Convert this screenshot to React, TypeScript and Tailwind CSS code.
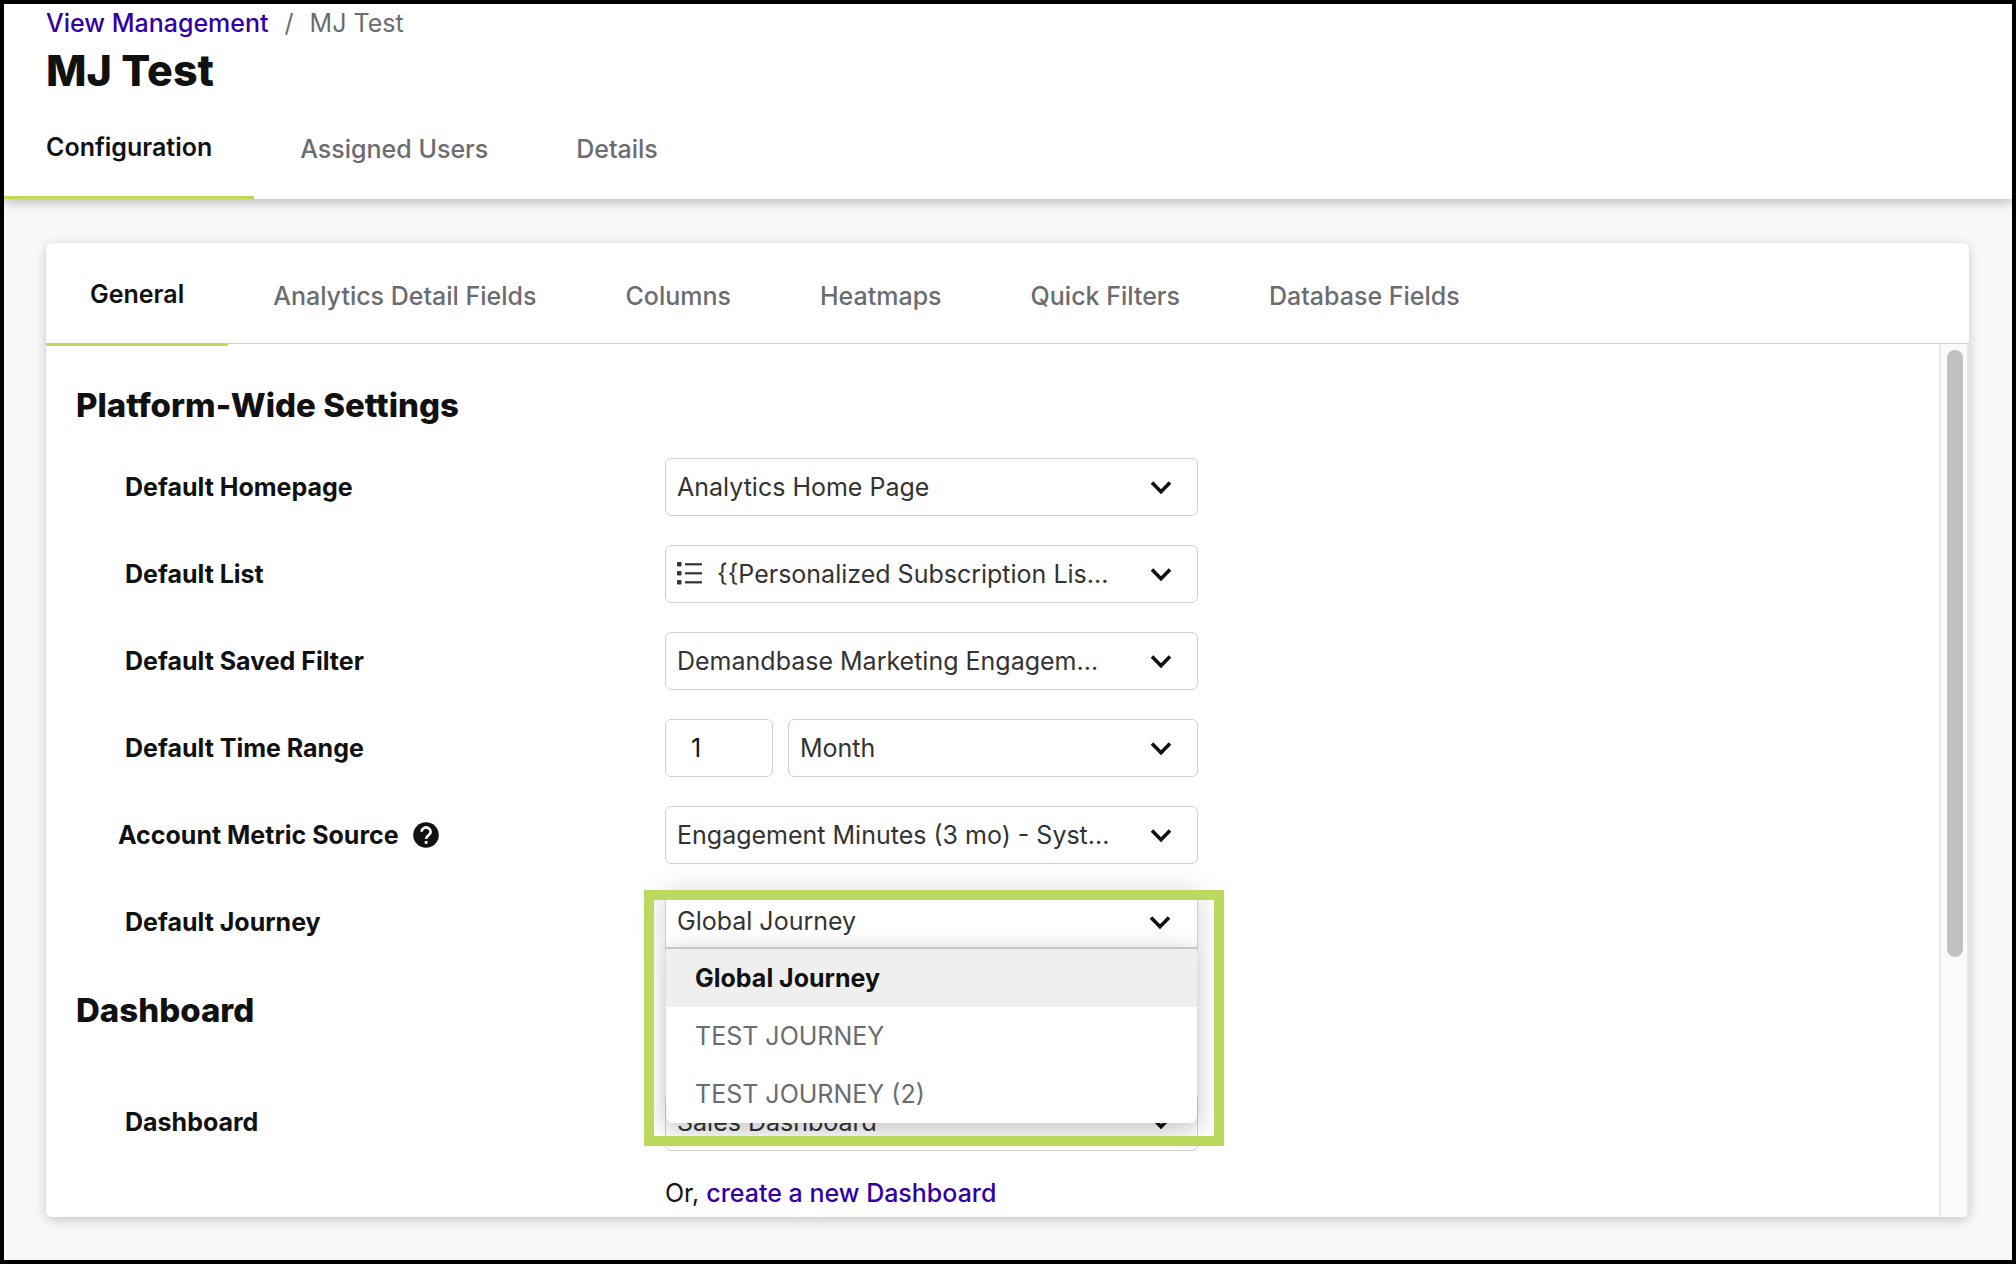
import type { ReactNode } from "react";

const pageTabs = ["Configuration", "Assigned Users", "Details"];

const cardTabs = [
  "General",
  "Analytics Detail Fields",
  "Columns",
  "Heatmaps",
  "Quick Filters",
  "Database Fields",
];

const journeys = ["Global Journey", "TEST JOURNEY", "TEST JOURNEY (2)"];

function Chevron() {
  return (
    <svg
      className="pointer-events-none absolute right-[25px] top-1/2 h-[22px] w-[24px] -translate-y-1/2"
      viewBox="0 0 24 22"
      fill="none"
    >
      <path d="M3 6.500l9 9.200 9-9.200" stroke="#111" strokeWidth={3.6} />
    </svg>
  );
}

function ListIcon() {
  return (
    <svg
      className="pointer-events-none absolute left-[12px] top-1/2 h-6 w-[26px] -translate-y-1/2"
      viewBox="0 0 26 24"
      fill="#333"
    >
      <rect x="0" y="0" width="4.500" height="4.500" rx="1" />
      <rect x="0" y="9" width="4.500" height="4.500" rx="1" />
      <rect x="0" y="18" width="4.500" height="4.500" rx="1" />
      <rect x="8" y="1.200" width="17" height="2.200" />
      <rect x="8" y="10.200" width="17" height="2.200" />
      <rect x="8" y="19.200" width="17" height="2.200" />
    </svg>
  );
}

function HelpIcon() {
  return (
    <svg className="block h-[26px] w-[26px]" viewBox="0 0 26 26" fill="none">
      <circle cx="13" cy="13" r="12.800" fill="#111" />
      <path
        d="M8.600 9.800a4.500 4.200 0 1 1 7 3.400c-1.700 1.200-2.500 1.900-2.500 3.900"
        stroke="#fff"
        strokeWidth={2.7}
      />
      <rect x="11.700" y="19" width="2.800" height="2.800" fill="#fff" />
    </svg>
  );
}

function Select({ id, value, icon }: { id: string; value: string; icon?: boolean }) {
  return (
    <div className="relative flex-1">
      {icon && <ListIcon />}
      <select
        id={id}
        aria-label={value}
        className={
          "block h-[58px] w-full appearance-none rounded-md border border-[#d0d0d0] bg-white pr-14 text-[#333] " +
          (icon ? "pl-[51px]" : "pl-[11px]")
        }
      >
        <option>{value}</option>
      </select>
      <Chevron />
    </div>
  );
}

function Row({ label, id, help, children }: { label: string; id: string; help?: boolean; children: ReactNode }) {
  return (
    <div className="grid grid-cols-[589px_minmax(0,533px)] items-center">
      <div className={"flex items-center gap-[14px] " + (help ? "pl-[42px]" : "pl-[49px]")}>
        <label htmlFor={id} className="font-bold">
          {label}
        </label>
        {help && (
          <button type="button" aria-label="Help">
            <HelpIcon />
          </button>
        )}
      </div>
      {children}
    </div>
  );
}

export default function App() {
  return (
    <div className="flex min-h-screen flex-col border-4 border-black bg-[#f9f7f8] font-['Inter',sans-serif] text-[25px] leading-9 text-[#111]">
      <header className="relative bg-white shadow-[0_2px_12px_rgba(0,0,0,0.3)]">
        <nav className="flex h-[38px] items-center gap-4 pl-[42px] text-[#6b6c70]">
          <a href="#" className="font-medium text-[#3300a6]">
            View Management
          </a>
          <span>/</span>
          <span>MJ Test</span>
        </nav>
        <h1 className="flex h-14 items-center pl-[42px] text-[43px] font-extrabold">MJ Test</h1>
        <div className="flex h-[101px] gap-1">
          {pageTabs.map((tab, i) => (
            <button
              key={tab}
              type="button"
              className={
                "px-[42px] " +
                (i === 0 ? "border-b-3 border-[#c3d952] font-semibold" : "font-medium text-[#6b6c70]")
              }
            >
              {tab}
            </button>
          ))}
        </div>
      </header>

      <main className="mt-11 mr-[43px] mb-[43px] ml-[42px] flex flex-1 flex-col rounded-md bg-white shadow-[0_3px_12px_rgba(0,0,0,0.2)]">
        <div className="flex h-[101px] gap-px border-b border-[#d0d0d0]">
          {cardTabs.map((tab, i) => (
            <button
              key={tab}
              type="button"
              className={
                "h-[103px] px-11 pt-0.5 " +
                (i === 0 ? "border-b-3 border-[#c3d952] font-semibold" : "font-medium text-[#6b6c70]")
              }
            >
              {tab}
            </button>
          ))}
        </div>

        <div className="flex flex-1">
          <div className="flex-1 pt-9 pl-[30px]">
            <h2 className="text-[33px] leading-[50px] font-extrabold">Platform-Wide Settings</h2>
            <div className="mt-7 flex flex-col gap-[29px]">
              <Row label="Default Homepage" id="homepage">
                <Select id="homepage" value="Analytics Home Page" />
              </Row>
              <Row label="Default List" id="list">
                <Select id="list" value="{{Personalized Subscription Lis..." icon />
              </Row>
              <Row label="Default Saved Filter" id="filter">
                <Select id="filter" value="Demandbase Marketing Engagem..." />
              </Row>
              <Row label="Default Time Range" id="range">
                <div className="flex gap-[15px]">
                  <input
                    id="range"
                    type="text"
                    defaultValue="1"
                    className="h-[58px] w-[108px] rounded-md border border-[#d0d0d0] px-[25px]"
                  />
                  <Select id="range-unit" value="Month" />
                </div>
              </Row>
              <Row label="Account Metric Source" id="metric" help>
                <Select id="metric" value="Engagement Minutes (3 mo) - Syst..." />
              </Row>
              <Row label="Default Journey" id="journey">
                <div className="relative z-10">
                  <button
                    id="journey"
                    type="button"
                    aria-expanded="true"
                    className="relative block h-[58px] w-full rounded-t-md border border-[#d0d0d0] bg-white px-[11px] pb-0.5 text-left text-[#333] shadow-[0_0_30px_rgba(0,0,0,0.18)]"
                  >
                    Global Journey
                    <Chevron />
                  </button>
                  <ul
                    role="listbox"
                    className="absolute inset-x-px top-[54px] overflow-hidden rounded-b-lg border-t-2 border-[#c8c8c8] bg-white text-[#6b6c70] shadow-[0_6px_24px_rgba(0,0,0,0.25)]"
                  >
                    {journeys.map((name, i) => (
                      <li
                        key={name}
                        role="option"
                        aria-selected={i === 0}
                        className={
                          "flex h-[58px] items-center pl-[29px] " +
                          (i === 0 ? "bg-[#efefef] font-bold text-[#111]" : "")
                        }
                      >
                        {name}
                      </li>
                    ))}
                  </ul>
                  <div className="pointer-events-none absolute -top-[3px] -right-[26px] -left-[21px] h-64 border-10 border-[#bcd95f]" />
                </div>
              </Row>
            </div>

            <h2 className="mt-[34px] text-[33px] leading-[50px] font-extrabold">Dashboard</h2>
            <div className="mt-[58px]">
              <Row label="Dashboard" id="dashboard">
                <Select id="dashboard" value="Sales Dashboard" />
              </Row>
            </div>
            <p className="mt-6 pl-[589px]">
              Or,{" "}
              <a href="#" className="font-medium text-[#3300a6]">
                create a new Dashboard
              </a>
            </p>
          </div>

          <div className="w-[30px] rounded-br-md border-x-2 border-[#e8e8e8] bg-[#fafafa] pr-1 pl-[6px]">
            <div className="h-full pt-[6px]">
              <div className="h-[70%] rounded-full bg-[#c1c1c1]" />
            </div>
          </div>
        </div>
      </main>
    </div>
  );
}
